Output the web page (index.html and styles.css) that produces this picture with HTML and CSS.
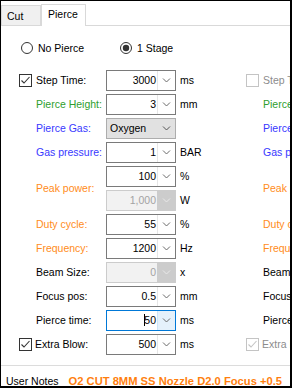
FILE: index.html
```html
<!DOCTYPE html>
<html lang="en">
<head>
    <meta charset="UTF-8">
    <meta name="viewport" content="width=device-width, initial-scale=1.0">
    <title>Pierce</title>
    <link rel="stylesheet" href="styles.css">
</head>
<body>
    <div class="window">
        <div class="tabs">
            <div class="tab tab-cut">Cut</div>
            <div class="tab tab-pierce">Pierce</div>
        </div>

        <div class="panel">
            <div class="modes">
                <div class="radio first">
                    <svg width="12" height="12" viewBox="0 0 12 12"><circle cx="6" cy="6" r="5.5" fill="#fff" stroke="#333"/></svg>
                    No Pierce
                </div>
                <div class="radio">
                    <svg width="12" height="12" viewBox="0 0 12 12"><circle cx="6" cy="6" r="5.5" fill="#fff" stroke="#333"/><circle cx="6" cy="6" r="3.2" fill="#333"/></svg>
                    1 Stage
                </div>
            </div>

            <div class="stages">
                <!-- stage 1 -->
                <div class="stage">
                    <svg class="check" width="13" height="13" viewBox="0 0 13 13"><rect x="0.5" y="0.5" width="12" height="12" fill="#fff" stroke="#333"/><path d="M2.5 6.5 L5 9 L10.5 3" fill="none" stroke="#333" stroke-width="1.1"/></svg>
                    <div class="lbl">Step Time:</div>
                    <div class="spin"><span class="val">3000</span><span class="btn"><svg width="9" height="5" viewBox="0 0 9 5"><path d="M1 0.5 L4.5 4 L8 0.5" fill="none" stroke="#6b6b6b"/></svg></span></div>
                    <div class="unit">ms</div>

                    <div class="lbl green">Pierce Height:</div>
                    <div class="spin"><span class="val">3</span><span class="btn"><svg width="9" height="5" viewBox="0 0 9 5"><path d="M1 0.5 L4.5 4 L8 0.5" fill="none" stroke="#6b6b6b"/></svg></span></div>
                    <div class="unit">mm</div>

                    <div class="lbl blue">Pierce Gas:</div>
                    <div class="spin combo"><span class="val">Oxygen</span><span class="btn"><svg width="9" height="5" viewBox="0 0 9 5"><path d="M1 0.5 L4.5 4 L8 0.5" fill="none" stroke="#555"/></svg></span></div>
                    <div class="unit"></div>

                    <div class="lbl blue">Gas pressure:</div>
                    <div class="spin"><span class="val">1</span><span class="btn"><svg width="9" height="5" viewBox="0 0 9 5"><path d="M1 0.5 L4.5 4 L8 0.5" fill="none" stroke="#6b6b6b"/></svg></span></div>
                    <div class="unit">BAR</div>

                    <div class="lbl orange span2">Peak power:</div>
                    <div class="spin"><span class="val">100</span><span class="btn"><svg width="9" height="5" viewBox="0 0 9 5"><path d="M1 0.5 L4.5 4 L8 0.5" fill="none" stroke="#6b6b6b"/></svg></span></div>
                    <div class="unit">%</div>
                    <div class="spin disabled"><span class="val">1,000</span><span class="btn"><svg width="9" height="5" viewBox="0 0 9 5"><path d="M1 0.5 L4.5 4 L8 0.5" fill="none" stroke="#e8e8e8"/></svg></span></div>
                    <div class="unit">W</div>

                    <div class="lbl orange">Duty cycle:</div>
                    <div class="spin"><span class="val">55</span><span class="btn"><svg width="9" height="5" viewBox="0 0 9 5"><path d="M1 0.5 L4.5 4 L8 0.5" fill="none" stroke="#6b6b6b"/></svg></span></div>
                    <div class="unit">%</div>

                    <div class="lbl orange">Frequency:</div>
                    <div class="spin"><span class="val">1200</span><span class="btn"><svg width="9" height="5" viewBox="0 0 9 5"><path d="M1 0.5 L4.5 4 L8 0.5" fill="none" stroke="#6b6b6b"/></svg></span></div>
                    <div class="unit">Hz</div>

                    <div class="lbl">Beam Size:</div>
                    <div class="spin disabled"><span class="val">0</span><span class="btn"><svg width="9" height="5" viewBox="0 0 9 5"><path d="M1 0.5 L4.5 4 L8 0.5" fill="none" stroke="#e8e8e8"/></svg></span></div>
                    <div class="unit">x</div>

                    <div class="lbl">Focus pos:</div>
                    <div class="spin"><span class="val">0.5</span><span class="btn"><svg width="9" height="5" viewBox="0 0 9 5"><path d="M1 0.5 L4.5 4 L8 0.5" fill="none" stroke="#6b6b6b"/></svg></span></div>
                    <div class="unit">mm</div>

                    <div class="lbl">Pierce time:</div>
                    <div class="spin focused"><span class="val"><span class="caret"></span>50</span><span class="btn"><svg width="9" height="5" viewBox="0 0 9 5"><path d="M1 0.5 L4.5 4 L8 0.5" fill="none" stroke="#6b6b6b"/></svg></span></div>
                    <div class="unit">ms</div>

                    <svg class="check" width="13" height="13" viewBox="0 0 13 13"><rect x="0.5" y="0.5" width="12" height="12" fill="#fff" stroke="#333"/><path d="M2.5 6.5 L5 9 L10.5 3" fill="none" stroke="#333" stroke-width="1.1"/></svg>
                    <div class="lbl tight">Extra Blow:</div>
                    <div class="spin"><span class="val">500</span><span class="btn"><svg width="9" height="5" viewBox="0 0 9 5"><path d="M1 0.5 L4.5 4 L8 0.5" fill="none" stroke="#6b6b6b"/></svg></span></div>
                    <div class="unit">ms</div>
                </div>

                <!-- stage 2, not active -->
                <div class="stage">
                    <svg class="check" width="13" height="13" viewBox="0 0 13 13"><rect x="0.5" y="0.5" width="12" height="12" fill="#fff" stroke="#c4c4c4"/></svg>
                    <div class="lbl off">Step Time:</div>
                    <div class="spin disabled"><span class="val">3000</span></div>
                    <div class="unit">ms</div>

                    <div class="lbl green">Pierce Height:</div>
                    <div class="spin disabled"><span class="val">3</span></div>
                    <div class="unit">mm</div>

                    <div class="lbl blue">Pierce Gas:</div>
                    <div class="spin disabled"><span class="val">Oxygen</span></div>
                    <div class="unit"></div>

                    <div class="lbl blue">Gas pressure:</div>
                    <div class="spin disabled"><span class="val">1</span></div>
                    <div class="unit">BAR</div>

                    <div class="lbl orange span2">Peak power:</div>
                    <div class="spin disabled"><span class="val">100</span></div>
                    <div class="unit">%</div>
                    <div class="spin disabled"><span class="val">1,000</span></div>
                    <div class="unit">W</div>

                    <div class="lbl orange">Duty cycle:</div>
                    <div class="spin disabled"><span class="val">55</span></div>
                    <div class="unit">%</div>

                    <div class="lbl orange">Frequency:</div>
                    <div class="spin disabled"><span class="val">1200</span></div>
                    <div class="unit">Hz</div>

                    <div class="lbl">Beam Size:</div>
                    <div class="spin disabled"><span class="val">0</span></div>
                    <div class="unit">x</div>

                    <div class="lbl">Focus pos:</div>
                    <div class="spin disabled"><span class="val">0.5</span></div>
                    <div class="unit">mm</div>

                    <div class="lbl">Pierce time:</div>
                    <div class="spin disabled"><span class="val">50</span></div>
                    <div class="unit">ms</div>

                    <svg class="check" width="13" height="13" viewBox="0 0 13 13"><rect x="0.5" y="0.5" width="12" height="12" fill="#fff" stroke="#c4c4c4"/><path d="M2.5 6.5 L5 9 L10.5 3" fill="none" stroke="#c4c4c4" stroke-width="1.1"/></svg>
                    <div class="lbl tight off">Extra Blow:</div>
                    <div class="spin disabled"><span class="val">500</span></div>
                    <div class="unit">ms</div>
                </div>
            </div>
        </div>

        <div class="notes">User Notes<span class="note-text">O2 CUT 8MM SS Nozzle D2.0 Focus +0.5</span></div>
    </div>
</body>
</html>
```

FILE: styles.css
```css
* {
    box-sizing: border-box;
}

body {
    margin: 0;
    font-family: "Liberation Sans", Arial, sans-serif;
    font-size: 10.5px;
    color: #000;
    background: #fff;
}

.window {
    width: 292px;
    height: 388px;
    border-style: solid;
    border-color: #000;
    border-width: 1px 2px 2px 1px;
    overflow: hidden;
    background: #fff;
}

/* tab strip */
.tabs {
    display: flex;
    align-items: flex-end;
    height: 25px;
    border-bottom: 1px solid #d9d9d9;
}

.tab {
    border: 1px solid #d9d9d9;
    border-bottom: none;
    white-space: nowrap;
}

.tab-cut {
    width: 40px;
    height: 20px;
    padding: 1px 0 0 5px;
    line-height: 19px;
    background: #f0f0f0;
}

.tab-pierce {
    width: 45px;
    height: 22px;
    margin-bottom: -1px;
    padding-left: 6px;
    line-height: 19px;
    background: #fff;
    position: relative;
}

/* content */
.panel {
    height: 340px;
    padding-top: 16px;
    border-bottom: 1px solid #dcdcdc;
}

.modes {
    display: flex;
    align-items: center;
    height: 12px;
    margin-left: 20px;
}

.radio {
    display: flex;
    align-items: center;
    gap: 5px;
    white-space: nowrap;
}

.radio.first {
    width: 99px;
}

.stages {
    display: flex;
    margin: 16px 0 0 18px;
}

.stage {
    flex-shrink: 0;
    width: 227px;
    display: grid;
    grid-template-columns: 17px 70px 70px 1fr;
    grid-auto-rows: 21px;
    row-gap: 3px;
    align-items: center;
}

.check {
    grid-column: 1;
    display: block;
}

.lbl {
    grid-column: 2;
    line-height: 21px;
    white-space: nowrap;
}

.lbl.tight {
    margin-left: -1px;
}

.lbl.span2 {
    grid-row: span 2;
}

.green { color: #2e9e2e; }
.blue { color: #3838ff; }
.orange { color: #ff8c1a; }
.off { color: #8c8c8c; }

.unit {
    padding-left: 4px;
    line-height: 21px;
    white-space: nowrap;
}

/* spin boxes */
.spin {
    grid-column: 3;
    display: flex;
    height: 21px;
    border: 1px solid #7a7a7a;
    background: #fff;
}

.spin .val {
    flex: 1;
    text-align: right;
    padding-right: 1px;
    line-height: 19px;
    white-space: nowrap;
}

.spin .btn {
    width: 18px;
    border-left: 1px solid #e6e6e6;
    display: flex;
    align-items: center;
    justify-content: center;
}

.spin.combo {
    background: #e1e1e1;
    border-color: #adadad;
}

.spin.combo .val {
    text-align: left;
    padding-left: 3px;
}

.spin.combo .btn {
    border-left: none;
}

.spin.disabled {
    background: #f2f2f2;
    border-color: #cccccc;
    color: #a3a3a3;
}

.spin.disabled .btn {
    background: #cccccc;
    border-left-color: #cccccc;
}

.spin.focused {
    border-color: #0078d7;
}

.spin.focused .btn {
    background: #e5f1fb;
    border-left-color: #cce4f7;
}

.caret {
    display: inline-block;
    width: 1px;
    height: 12px;
    margin-right: -1px;
    vertical-align: -2px;
    background: #000;
}

/* bottom line */
.notes {
    padding: 8px 0 0 5px;
    line-height: 14px;
    white-space: nowrap;
}

.note-text {
    margin-left: 10px;
    font-size: 11.2px;
    font-weight: bold;
    color: #ff7f0f;
}
```
